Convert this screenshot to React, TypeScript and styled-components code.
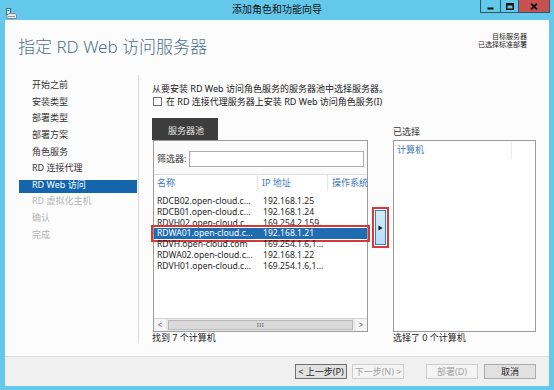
import React from "react";
import styled, { createGlobalStyle } from "styled-components";

const Global = createGlobalStyle`
  html, body { margin: 0; padding: 0; background: #63c8ea; overflow: hidden; }
  body { font-family: "Noto Sans", "Noto Sans CJK SC", sans-serif; color: #1e1e1e; }
  * { box-sizing: border-box; }
`;

const Window = styled.div`
  width: 554px;
  height: 390px;
  background: #63c8ea;
  display: flex;
  flex-direction: column;
  overflow: hidden;
`;

const TitleBar = styled.div`
  height: 20px;
  flex-shrink: 0;
  display: grid;
  grid-template-columns: 1fr auto 1fr;
  align-items: start;
`;

const AppIcon = styled.div`
  padding: 3px 0 0 6px;
  height: 20px;
`;

const TitleText = styled.div`
  font-size: 10px;
  line-height: 18px;
  color: #111;
`;

const Controls = styled.div`
  justify-self: end;
  margin-right: 4px;
  display: flex;
  border: 1px solid #2f5566;
  border-top: none;
  height: 13px;
`;

const CtrlBtn = styled.div<{ $w: number; $close?: boolean; $first?: boolean }>`
  width: ${(p) => p.$w}px;
  height: 100%;
  background: ${(p) => (p.$close ? "#c75050" : "#63c8ea")};
  border-left: ${(p) => (p.$first ? "none" : "1px solid #2f5566")};
  display: flex;
  align-items: center;
  justify-content: center;
`;

const Client = styled.div`
  flex: 1;
  margin: 0 5px 4px;
  background: #fcfcfc;
  display: flex;
  flex-direction: column;
  min-height: 0;
`;

const Header = styled.div`
  height: 55px;
  flex-shrink: 0;
  display: flex;
  justify-content: space-between;
  align-items: flex-start;
  padding: 0 22px 0 13px;
`;

const PageTitle = styled.div`
  margin-top: 17px;
  font-size: 17px;
  line-height: 20px;
  color: #4a7190;
  font-weight: 300;
`;

const Info = styled.div`
  margin-top: 13px;
  font-size: 7px;
  line-height: 8px;
  text-align: right;
  color: #222;
`;

const Body = styled.div`
  flex: 1;
  display: flex;
  min-height: 0;
`;

const Nav = styled.div`
  width: 134px;
  flex-shrink: 0;
  margin-bottom: 13px;
  border-right: 1px solid #d8d8d8;
  padding: 5px 1px 0 14px;
  display: flex;
  flex-direction: column;
  gap: 3.65px;
`;

const NavItem = styled.div<{ $state: "done" | "active" | "todo" }>`
  height: 13px;
  line-height: 9px;
  padding: 0 0 4px 13px;
  font-size: 9px;
  white-space: nowrap;
  background: ${(p) => (p.$state === "active" ? "#1565ac" : "transparent")};
  color: ${(p) =>
    p.$state === "active" ? "#ffffff" : p.$state === "todo" ? "#b4b4b4" : "#333333"};
`;

const Main = styled.div`
  flex: 1;
  padding: 7px 13px 0 13px;
  display: flex;
  flex-direction: column;
  min-width: 0;
`;

const Line = styled.div`
  font-size: 9px;
  line-height: 13px;
  white-space: nowrap;
  color: #222;
`;

const CheckRow = styled.label`
  display: flex;
  align-items: center;
  gap: 4px;
  font-size: 9px;
  line-height: 13px;
  white-space: nowrap;
  color: #222;
  padding-left: 1px;
`;

const CheckBox = styled.span`
  width: 9px;
  height: 9px;
  border: 1px solid #707070;
  background: #fff;
  display: inline-block;
`;

const Columns = styled.div`
  margin-top: 10px;
  display: flex;
`;

const LeftCol = styled.div`
  width: 216px;
  display: flex;
  flex-direction: column;
`;

const Tab = styled.div`
  width: 66px;
  height: 22px;
  background: #3d3d3d;
  color: #e6e6e6;
  font-size: 9px;
  line-height: 22px;
  padding-left: 16px;
  padding-top: 2px;
`;

const ListBox = styled.div<{ $w: number; $ml: number }>`
  width: ${(p) => p.$w}px;
  height: 192px;
  margin-left: ${(p) => p.$ml}px;
  border: 1px solid #9c9c9c;
  background: #fff;
  display: flex;
  flex-direction: column;
`;

const FilterRow = styled.div`
  height: 34px;
  flex-shrink: 0;
  background: #fafafa;
  border-bottom: 1px solid #dcdcdc;
  display: flex;
  align-items: flex-start;
  padding: 10px 3px 0 3px;
  gap: 3px;
  font-size: 9px;
  color: #333;
`;

const FilterLabel = styled.span`
  line-height: 16px;
  white-space: nowrap;
`;

const FilterInput = styled.div`
  flex: 1;
  height: 16px;
  border: 1px solid #abadb3;
  background: #fff;
`;

const HeadRow = styled.div`
  height: 16px;
  flex-shrink: 0;
  display: grid;
  grid-template-columns: 103px 70px 1fr;
`;

const HeadCell = styled.div<{ $sep?: boolean }>`
  font-size: 9px;
  line-height: 16px;
  color: #3a79b8;
  padding-left: ${(p) => (p.$sep ? 4 : 3)}px;
  border-left: ${(p) => (p.$sep ? "1px solid #e6e6e6" : "none")};
  white-space: nowrap;
`;

const Rows = styled.div`
  flex: 1;
  padding-top: 5px;
  display: flex;
  flex-direction: column;
`;

const Row = styled.div<{ $sel?: boolean }>`
  height: 10.8px;
  display: grid;
  grid-template-columns: 104px 1fr;
  font-size: 8.6px;
  line-height: 10.8px;
  background: ${(p) => (p.$sel ? "#1f6cb3" : "transparent")};
  color: ${(p) => (p.$sel ? "#fff" : "#1e1e1e")};
  outline: ${(p) => (p.$sel ? "2px solid #d63a36" : "none")};
  outline-offset: 1px;
`;

const Cell = styled.div<{ $pad: number }>`
  padding-left: ${(p) => p.$pad}px;
  white-space: nowrap;
`;

const HScroll = styled.div`
  height: 13px;
  flex-shrink: 0;
  display: flex;
  align-items: stretch;
  background: #e8e8e8;
  border-top: 1px solid #d0d0d0;
`;

const ScrollBtn = styled.div`
  width: 12px;
  font-size: 8px;
  line-height: 12px;
  text-align: center;
  color: #606060;
  background: #f4f4f4;
`;

const Thumb = styled.div`
  flex: 1;
  margin: 1px 2px;
  background: #dadada;
  border: 1px solid #b9b9b9;
  display: flex;
  align-items: center;
  justify-content: center;
  font-size: 6px;
  letter-spacing: 0.5px;
  color: #555;
`;

const Status = styled.div`
  font-size: 9px;
  line-height: 12px;
  color: #222;
  white-space: nowrap;
`;

const ArrowCol = styled.div`
  width: 25px;
  flex-shrink: 0;
`;

const MoveBtn = styled.div`
  margin: 92px 0 0 7px;
  width: 11px;
  height: 35px;
  background: linear-gradient(#d3edfc, #b8defa);
  border: 1px solid #3c7fb1;
  outline: 2px solid #d63a36;
  outline-offset: 1px;
  display: flex;
  align-items: center;
  justify-content: center;
`;

const RightCol = styled.div`
  flex: 1;
  display: flex;
  flex-direction: column;
`;

const RightLabel = styled.div`
  margin-top: 8px;
  margin-bottom: 2px;
  font-size: 9px;
  line-height: 12px;
  color: #333;
`;

const SelHead = styled.div`
  height: 18px;
  display: grid;
  grid-template-columns: 117px 1fr;
`;

const SelCell = styled.div<{ $sep?: boolean }>`
  font-size: 9px;
  line-height: 18px;
  padding-left: 3px;
  color: #3a79b8;
  border-left: ${(p) => (p.$sep ? "1px solid #ececec" : "none")};
`;

const Footer = styled.div`
  height: 30px;
  flex-shrink: 0;
  border-top: 1px solid #dedede;
  background: #f0f0f0;
  display: flex;
  justify-content: flex-end;
  align-items: flex-start;
  padding: 7px 13px 0 0;
`;

const Btn = styled.div<{ $kind: "default" | "normal" | "disabled"; $ml: number }>`
  width: 52px;
  height: 15px;
  margin-left: ${(p) => p.$ml}px;
  font-size: 9px;
  line-height: 13px;
  text-align: center;
  white-space: nowrap;
  border: 1px solid
    ${(p) => (p.$kind === "default" ? "#6f6f6f" : p.$kind === "normal" ? "#acacac" : "#cdcdcd")};
  background: ${(p) => (p.$kind === "disabled" ? "#f4f4f4" : "#e1e1e1")};
  color: ${(p) => (p.$kind === "disabled" ? "#a3a3a3" : "#1e1e1e")};
`;

const navItems: { label: string; state: "done" | "active" | "todo" }[] = [
  { label: "开始之前", state: "done" },
  { label: "安装类型", state: "done" },
  { label: "部署类型", state: "done" },
  { label: "部署方案", state: "done" },
  { label: "角色服务", state: "done" },
  { label: "RD 连接代理", state: "done" },
  { label: "RD Web 访问", state: "active" },
  { label: "RD 虚拟化主机", state: "todo" },
  { label: "确认", state: "todo" },
  { label: "完成", state: "todo" },
];

const servers = [
  ["RDCB02.open-cloud.c...", "192.168.1.25"],
  ["RDCB01.open-cloud.c...", "192.168.1.24"],
  ["RDVH02.open-cloud.c...", "169.254.2.159,..."],
  ["RDWA01.open-cloud.c...", "192.168.1.21"],
  ["RDVH.open-cloud.com", "169.254.1.6,1..."],
  ["RDWA02.open-cloud.c...", "192.168.1.22"],
  ["RDVH01.open-cloud.c...", "169.254.1.6,1..."],
];

const WizardIcon = () => (
  <svg width="11" height="12" viewBox="0 0 11 12">
    <rect x="0.5" y="0.5" width="4" height="6" fill="#d8eefa" stroke="#2f6fa8" />
    <rect x="1.5" y="2" width="2" height="1" fill="#2f6fa8" />
    <path d="M1 7 L3 5.5 H9 L10.5 7 V10.5 H1 Z" fill="#e8e8e8" stroke="#7a7a7a" strokeWidth="0.8" />
    <rect x="2" y="8" width="7" height="1" fill="#9a9a9a" />
  </svg>
);

export default function App() {
  return (
    <>
      <Global />
      <Window>
        <TitleBar>
          <AppIcon>
            <WizardIcon />
          </AppIcon>
          <TitleText>添加角色和功能向导</TitleText>
          <Controls>
            <CtrlBtn $w={19} $first>
              <svg width="7" height="7" viewBox="0 0 7 7">
                <rect x="0.5" y="4.5" width="6" height="2" fill="#111" />
              </svg>
            </CtrlBtn>
            <CtrlBtn $w={18}>
              <svg width="8" height="7" viewBox="0 0 8 7">
                <rect x="0.75" y="0.75" width="6.5" height="5.5" fill="none" stroke="#111" strokeWidth="1.5" />
                <rect x="0.5" y="0.5" width="7" height="2" fill="#111" />
              </svg>
            </CtrlBtn>
            <CtrlBtn $w={31} $close>
              <svg width="8" height="7" viewBox="0 0 8 7">
                <path d="M1 0.5 L7 6.5 M7 0.5 L1 6.5" stroke="#111" strokeWidth="1.8" />
              </svg>
            </CtrlBtn>
          </Controls>
        </TitleBar>
        <Client>
          <Header>
            <PageTitle>指定 RD Web 访问服务器</PageTitle>
            <Info>
              <div>目标服务器</div>
              <div>已选择标准部署</div>
            </Info>
          </Header>
          <Body>
            <Nav>
              {navItems.map((n) => (
                <NavItem key={n.label} $state={n.state}>
                  {n.label}
                </NavItem>
              ))}
            </Nav>
            <Main>
              <Line>从要安装 RD Web 访问角色服务的服务器池中选择服务器。</Line>
              <CheckRow>
                <CheckBox />
                在 RD 连接代理服务器上安装 RD Web 访问角色服务(I)
              </CheckRow>
              <Columns>
                <LeftCol>
                  <Tab>服务器池</Tab>
                  <ListBox $w={215} $ml={1}>
                    <FilterRow>
                      <FilterLabel>筛选器:</FilterLabel>
                      <FilterInput />
                    </FilterRow>
                    <HeadRow>
                      <HeadCell>名称</HeadCell>
                      <HeadCell $sep>IP 地址</HeadCell>
                      <HeadCell $sep>操作系统</HeadCell>
                    </HeadRow>
                    <Rows>
                      {servers.map(([name, ip], i) => (
                        <Row key={name} $sel={i === 3}>
                          <Cell $pad={3}>{name}</Cell>
                          <Cell $pad={5}>{ip}</Cell>
                        </Row>
                      ))}
                    </Rows>
                    <HScroll>
                      <ScrollBtn>&lt;</ScrollBtn>
                      <Thumb>III</Thumb>
                      <ScrollBtn>&gt;</ScrollBtn>
                    </HScroll>
                  </ListBox>
                  <Status>找到 7 个计算机</Status>
                </LeftCol>
                <ArrowCol>
                  <MoveBtn>
                    <svg width="5" height="6" viewBox="0 0 5 6">
                      <path d="M0.5 0.5 L4.5 3 L0.5 5.5 Z" fill="#111" />
                    </svg>
                  </MoveBtn>
                </ArrowCol>
                <RightCol>
                  <RightLabel>已选择</RightLabel>
                  <ListBox $w={143} $ml={0}>
                    <SelHead>
                      <SelCell>计算机</SelCell>
                      <SelCell $sep />
                    </SelHead>
                  </ListBox>
                  <Status>选择了 0 个计算机</Status>
                </RightCol>
              </Columns>
            </Main>
          </Body>
          <Footer>
            <Btn $kind="default" $ml={0}>&lt; 上一步(P)</Btn>
            <Btn $kind="disabled" $ml={5}>下一步(N) &gt;</Btn>
            <Btn $kind="disabled" $ml={22}>部署(D)</Btn>
            <Btn $kind="normal" $ml={6}>取消</Btn>
          </Footer>
        </Client>
      </Window>
    </>
  );
}
